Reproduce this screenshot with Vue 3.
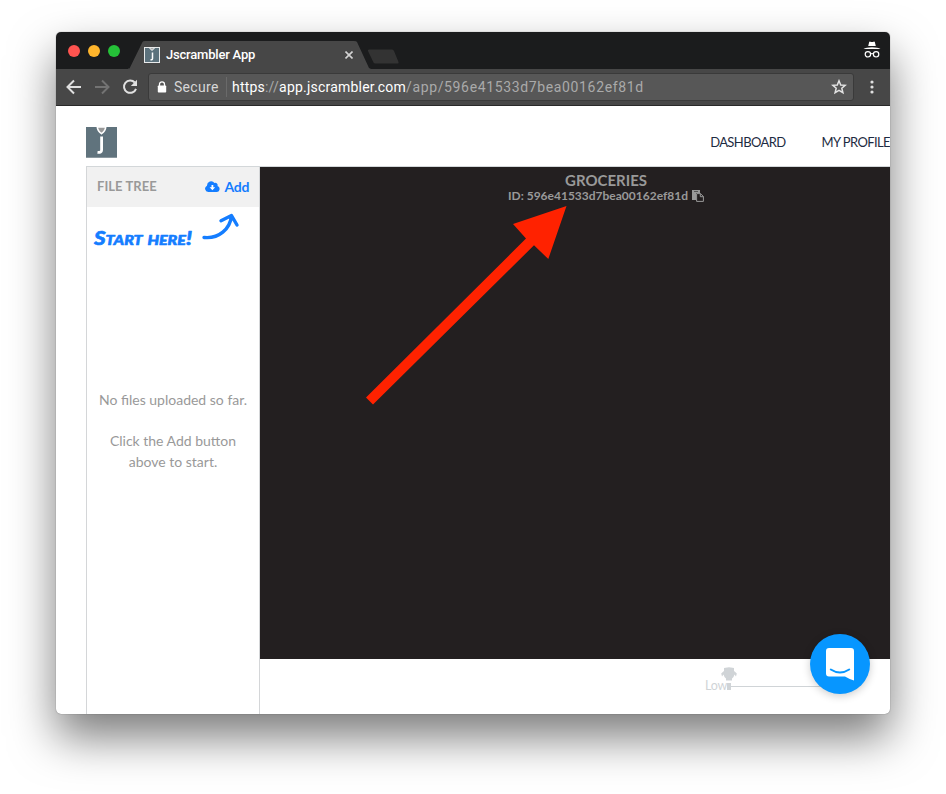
<script setup>
const url = { scheme: 'https', sep: '://', host: 'app.jscrambler.com', path: '/app/596e41533d7bea00162ef81d' }
const projectId = '596e41533d7bea00162ef81d'
const lights = ['red', 'amber', 'green']
</script>

<template>
  <div class="desktop">
    <div class="window">
      <div class="tabstrip">
        <div class="lights"><i v-for="l in lights" :key="l" :class="l"></i></div>
        <div class="tab">
          <svg class="tabshape" width="243" height="29" viewBox="0 0 243 29"><path d="M0 28.500 H1.500 L14.500 2 Q15 1 17 1 H226 Q228.500 1 229 2 L241 28 L243 29 H0Z" fill="#474747"/></svg>
          <div class="tabcontent">
            <svg width="16" height="16" viewBox="0 0 16 16"><rect x=".5" y=".5" width="15" height="15" fill="#5c727d" stroke="#e8eaeb"/><path d="M5.500 1 L8 3.500 L10.500 1" fill="#aaa" stroke="#fff"/><path d="M8.500 5.500 V11.500 Q8.500 13 6.500 12.700" fill="none" stroke="#fff" stroke-width="1.500"/></svg>
            <span class="tabtitle">Jscrambler App</span>
            <svg class="close" width="8" height="8" viewBox="0 0 8 8"><path d="M.5 .5 L7.500 7.500 M7.500 .5 L.5 7.500" stroke="#d3d3d3" stroke-width="1.600"/></svg>
          </div>
        </div>
        <svg class="newtab" width="33" height="15" viewBox="0 0 33 15"><path d="M2 .5 H25 Q26.500 .5 27 2 L31.500 13 Q32 14.500 30.500 14.500 H8.500 Q7 14.500 6.500 13.500 L1 2 Q.5 .5 2 .5Z" fill="#333"/></svg>
        <svg class="incognito" width="18" height="18" viewBox="0 0 18 18"><path d="M5.200 5 L6.200 1 Q6.500 .3 7.400 .7 Q9 1.400 10.600 .7 Q11.500 .3 11.800 1 L12.800 5Z M.5 8 Q3 6.200 9 6.200 T17.500 8Z" fill="#fff"/><g fill="none" stroke="#fff" stroke-width="1.200"><circle cx="4.900" cy="13.300" r="2.700"/><circle cx="13.100" cy="13.300" r="2.700"/><path d="M7.500 13 Q9 12 10.500 13"/></g></svg>
      </div>
      <div class="toolbar">
        <svg class="back" width="16" height="16" viewBox="0 0 16 16"><path d="M15 8 H2 M8 1.500 L1.500 8 L8 14.500" fill="none" stroke="#e0e0e0" stroke-width="2"/></svg>
        <svg class="forward" width="16" height="16" viewBox="0 0 16 16"><path d="M1 8 H14 M8 1.500 L14.500 8 L8 14.500" fill="none" stroke="#737373" stroke-width="2"/></svg>
        <svg class="reload" width="16" height="16" viewBox="0 0 16 16"><path d="M12.800 3.500 A6.200 6.200 0 1 0 14 9.800" fill="none" stroke="#e0e0e0" stroke-width="2"/><path d="M15 .8 V7 H8.800Z" fill="#e0e0e0"/></svg>
        <div class="omnibox">
          <svg class="lock" width="10" height="12" viewBox="0 0 10 12"><rect x=".8" y="4.500" width="8.400" height="7" rx=".8" fill="#fff"/><path d="M2.500 5 V3.300 a2.500 2.500 0 0 1 5 0 V5" fill="none" stroke="#fff" stroke-width="1.300"/></svg>
          <span class="secure">Secure</span>
          <span class="divider"></span>
          <span class="url"><b>{{ url.scheme }}</b>{{ url.sep }}<b>{{ url.host }}</b><span class="path">{{ url.path }}</span></span>
          <svg class="star" width="16" height="16" viewBox="0 0 16 16"><path d="M8 1.800 L9.700 6 L14.200 6.300 L10.800 9.200 L11.900 13.700 L8 11.300 L4.100 13.700 L5.200 9.200 L1.800 6.300 L6.300 6Z" fill="none" stroke="#e2e2e2" stroke-width="1.500"/></svg>
        </div>
        <svg class="menu" width="4" height="14" viewBox="0 0 4 14" fill="#e0e0e0"><circle cx="2" cy="2" r="1.600"/><circle cx="2" cy="7" r="1.600"/><circle cx="2" cy="12" r="1.600"/></svg>
      </div>
      <header class="header">
        <svg class="logo" width="31" height="31" viewBox="0 0 31 31"><rect width="31" height="31" fill="#60737d"/><path d="M0 30.500H31" stroke="#8a979e"/><path d="M11.300 0 Q11.500 4 15.500 6.700 Q19.500 4 19.700 0Z" fill="#999" stroke="#fff" stroke-width="1.600"/><path d="M15.600 9.500 V23 Q15.600 25.800 11.500 25.400" fill="none" stroke="#fff" stroke-width="2.800"/></svg>
        <nav><a class="dash">DASHBOARD</a><a class="profile">MY PROFILE</a></nav>
      </header>
      <div class="main">
        <aside class="sidebar">
          <div class="treehead">
            <span class="treetitle">FILE TREE</span>
            <span class="add"><svg width="15" height="11" viewBox="0 0 15 11"><path d="M3.300 11 A3.300 3.300 0 0 1 2 4.700 A4.200 4.200 0 0 1 9.500 1.900 A2.400 2.400 0 0 1 12.500 5 A3.100 3.100 0 0 1 12 11Z" fill="#147dff"/><path d="M6.500 4 H8.300 V6.300 H10.200 L7.400 9.300 L4.600 6.300 H6.500Z" fill="#fff"/></svg>Add</span>
          </div>
          <div class="start">
            <svg class="startlabel" width="104" height="24" viewBox="0 0 104 24"><text x="3" y="18" textLength="98" lengthAdjust="spacingAndGlyphs">Start here!</text></svg>
            <svg class="swoosh" width="38" height="28" viewBox="0 0 38 28"><path d="M2 24.500 C17 26 28 16 29.500 3 M19 7.700 L29.500 2.500 L35 12" fill="none" stroke="#147dff" stroke-width="3.400" stroke-linecap="round" stroke-linejoin="round"/></svg>
          </div>
          <div class="empty"><p>No files uploaded so far.</p><p>Click the Add button<br>above to start.</p></div>
        </aside>
        <section class="workspace">
          <div class="canvas">
            <div class="name">GROCERIES</div>
            <div class="id"><span>ID: {{ projectId }}</span><svg width="12" height="12" viewBox="0 0 12 12"><path d="M0 0 H8 V3 H4 V10 H0Z" fill="#999"/><path d="M2 1.500H6" stroke="#555"/><path d="M4.600 3.600 H8.500 L11.400 6.500 V11.400 H4.600Z M8.300 3.600 V6.700 H11.400" fill="#231f20" stroke="#999" stroke-width="1"/></svg></div>
            <svg class="arrow" width="210" height="205" viewBox="0 0 210 205"><path d="M206.500 4 L188.300 57 L174 43.300 L13 202.500 L6 195.500 L166 36.500 L153 22Z" fill="#ff2200"/></svg>
          </div>
          <footer class="footer">
            <span class="low">Low</span>
            <div class="slider">
              <svg width="16" height="14" viewBox="0 0 16 14"><path d="M4.500 .8 Q8 -.3 11.500 .8 L13 1 V4 L14.200 5 L15.800 6.500 L15 9.500 L13.500 7.500 L12.500 10 L11 11.500 V13.500 H5 V11.500 L3.500 10 L2.500 7.500 L1 9.500 L.2 6.500 L1.800 5 L3 4 V1Z" fill="#d0d4d7"/></svg>
              <div class="rail"><i></i></div>
            </div>
          </footer>
        </section>
      </div>
    </div>
    <div class="chat"><svg width="28" height="33" viewBox="0 0 28 33"><path d="M3 0 H25 Q28 0 28 3 V32.500 Q23 31 19 28.500 H3 Q0 28.500 0 25.500 V3 Q0 0 3 0Z" fill="#fff"/><path d="M4.800 21.500 Q14 27.500 23.200 21.500" fill="none" stroke="#0796ff" stroke-width="2" stroke-linecap="round"/></svg></div>
  </div>
</template>

<style>
body { background: #fff; }
</style>

<style scoped>
.desktop { position: relative; box-sizing: border-box; width: 946px; height: 794px; padding: 32px 56px 80px; overflow: hidden; font-family: Lato, sans-serif; }
svg { display: block; flex-shrink: 0; }
.window { display: flex; flex-direction: column; height: 682px; border-radius: 5px; overflow: hidden; background: #fff; box-shadow: 0 0 1px rgba(0,0,0,.6), 0 23px 46px rgba(0,0,0,.52); }
.tabstrip { display: flex; align-items: flex-end; height: 37px; background: #1b1c1d; flex-shrink: 0; }
.lights { display: flex; gap: 8px; padding: 0 0 12px 12px; width: 60px; }
.lights i { width: 12px; height: 12px; border-radius: 50%; }
.red { background: #ff5450; }
.amber { background: #ffb52c; }
.green { background: #25c138; }
.tab { display: grid; width: 243px; height: 29px; }
.tabshape, .tabcontent { grid-area: 1 / 1; }
.tabcontent { display: flex; align-items: center; padding: 0 18px 0 16px; }
.tabtitle { flex: 1; margin-left: 6px; font: 500 13px/16px Roboto, sans-serif; color: #fff; letter-spacing: -.2px; }
.newtab { margin: 0 0 5px -4px; }
.incognito { margin: 0 9px 10px auto; }
.toolbar { display: flex; align-items: center; box-sizing: border-box; height: 37px; padding: 0 16px 1px 10px; background: #474747; border-bottom: 1px solid #292929; flex-shrink: 0; }
.forward { margin-left: 12px; }
.reload { margin-left: 12px; }
.omnibox { display: flex; align-items: center; box-sizing: border-box; width: 706px; height: 28px; margin-left: 10px; padding: 0 6px 0 8px; border: 1px solid #3a3a3a; border-radius: 3px; background: #575757; font: 14px/18px Roboto, sans-serif; }
.secure { margin-left: 7px; width: 52px; color: #d6d6d6; letter-spacing: .3px; }
.divider { width: 1px; height: 20px; background: #6a6a6a; }
.url { flex: 1; margin-left: 5px; color: #aaa; letter-spacing: .21px; white-space: nowrap; }
.url b { font-weight: 400; color: #fff; }
.path { letter-spacing: .64px; }
.menu { margin-left: auto; }
.header { display: flex; justify-content: space-between; height: 60px; padding-left: 30px; flex-shrink: 0; }
.logo { margin-top: 21px; }
nav { display: flex; gap: 36px; padding-top: 27px; font-size: 13px; line-height: 18px; letter-spacing: -.6px; color: #1d2b42; white-space: nowrap; }
.main { display: flex; flex: 1; margin-left: 30px; border-top: 1px solid #d3d7d9; min-height: 0; }
.sidebar { box-sizing: border-box; width: 174px; border-left: 1px solid #d4d6d8; border-right: 1px solid #d4d6d8; }
.treehead { display: flex; align-items: center; justify-content: space-between; box-sizing: border-box; height: 40px; padding: 0 10px 2px 10px; background: #f1f1f1; font-size: 13px; font-weight: 700; }
.treetitle { color: #999; letter-spacing: .05px; }
.add { display: flex; align-items: center; gap: 5px; color: #147dff; font-size: 14px; letter-spacing: -.35px; }
.start { display: flex; height: 40px; padding-left: 4px; }
.startlabel { margin-top: 20px; overflow: visible; }
.startlabel text { font: italic 900 18px Lato, sans-serif; font-variant: small-caps; fill: #147dff; stroke: #147dff; stroke-width: .6px; stroke-linejoin: round; }
.swoosh { margin: 6px 0 0 7px; }
.empty { padding-top: 142px; text-align: center; font-size: 14px; line-height: 21px; color: #999; }
.empty p { margin: 0 0 20px; }
.workspace { display: flex; flex-direction: column; flex: 1; }
.canvas { position: relative; height: 492px; background: #231f20; text-align: center; color: #999; font-weight: 700; }
.name { padding: 4px 0 0 62px; font-size: 15px; line-height: 19px; }
.id { display: flex; justify-content: center; align-items: center; gap: 4px; padding-left: 62px; font-size: 12px; line-height: 12px; }
.arrow { position: absolute; left: 100px; top: 35px; }
.footer { display: flex; padding: 8px 0 0 445px; color: #d0d4d7; }
.low { width: 22px; padding-top: 10px; font-size: 12.500px; line-height: 18px; letter-spacing: -.2px; }
.slider { width: 130px; margin-left: -6px; }
.rail { display: flex; align-items: center; height: 8px; margin: 1px 0 0 6px; background: linear-gradient(#d0d4d7, #d0d4d7) 0 4px / 100% 1px no-repeat; }
.rail i { width: 4px; height: 7px; background: #d0d4d7; }
.chat { position: absolute; left: 810px; top: 634px; display: flex; align-items: center; justify-content: center; width: 60px; height: 60px; border-radius: 50%; background: #0796ff; box-shadow: 0 2px 8px rgba(0,0,0,.2); }
</style>
